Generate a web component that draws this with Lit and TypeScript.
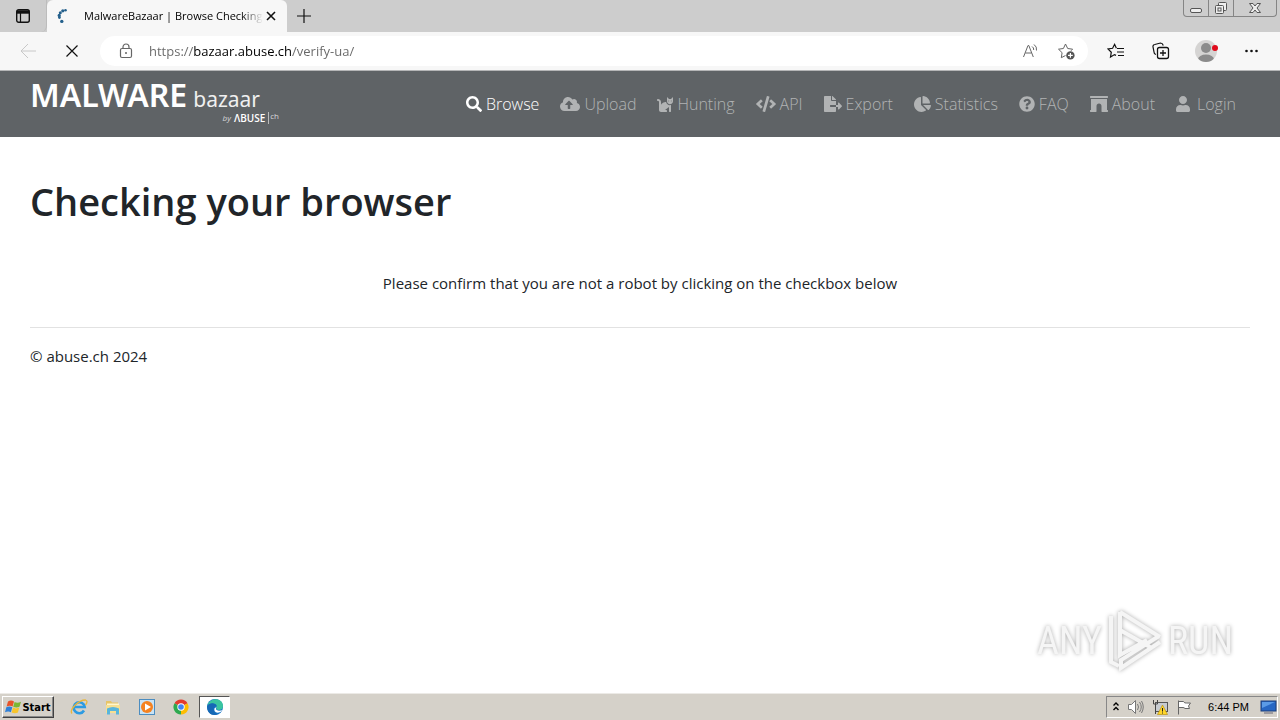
import { LitElement, html, css, svg } from "lit";
import { customElement } from "lit/decorators.js";
import { classMap } from "lit/directives/class-map.js";

const NAV = [
  { label: "Browse", w: 512, active: true, d: "M505 442.7L405.3 343c-4.5-4.5-10.6-7-17-7H372c27.6-35.3 44-79.7 44-128C416 93.1 322.9 0 208 0S0 93.1 0 208s93.1 208 208 208c48.3 0 92.7-16.4 128-44v16.3c0 6.4 2.5 12.5 7 17l99.7 99.7c9.4 9.4 24.6 9.4 33.9 0l28.3-28.3c9.4-9.4 9.4-24.6.1-34zM208 336c-70.7 0-128-57.2-128-128 0-70.7 57.2-128 128-128 70.7 0 128 57.2 128 128 0 70.7-57.2 128-128 128z" },
  { label: "Upload", w: 640, d: "M537.6 226.6c4.1-10.7 6.4-22.4 6.4-34.6 0-53-43-96-96-96-19.7 0-38.1 6-53.3 16.2C367 64.2 315.3 32 256 32c-88.4 0-160 71.6-160 160 0 2.7.1 5.4.2 8.1C40.2 219.8 0 273.2 0 336c0 79.5 64.5 144 144 144h368c70.7 0 128-57.3 128-128 0-61.9-44-113.6-102.4-125.4zM393.4 288H328v112c0 8.8-7.2 16-16 16h-48c-8.8 0-16-7.2-16-16V288h-65.4c-14.3 0-21.4-17.2-11.3-27.3l105.4-105.4c6.2-6.2 16.4-6.2 22.6 0l105.4 105.4c10.1 10.1 2.9 27.3-11.3 27.3z" },
  { label: "Hunting", w: 512, d: "M290.59 192c-20.18 0-106.82 1.98-162.59 85.95V192c0-52.94-43.06-96-96-96-17.67 0-32 14.33-32 32s14.33 32 32 32c17.64 0 32 14.36 32 32v256c0 35.3 28.7 64 64 64h176c8.84 0 16-7.16 16-16v-16c0-17.67-14.33-32-32-32h-32l128-96v144c0 8.84 7.16 16 16 16h32c8.84 0 16-7.16 16-16V289.86c-10.29 2.67-20.89 4.54-32 4.54-61.81 0-113.52-44.05-125.41-102.4zM448 96h-64l-64-64v134.4c0 53.02 42.98 96 96 96s96-42.98 96-96V32l-64 64zm-72 80c-8.84 0-16-7.16-16-16s7.16-16 16-16 16 7.16 16 16-7.16 16-16 16zm80 0c-8.84 0-16-7.16-16-16s7.16-16 16-16 16 7.16 16 16-7.16 16-16 16z" },
  { label: "API", w: 640, d: "M278.9 511.5l-61-17.7c-6.4-1.8-10-8.5-8.2-14.9L346.2 8.7c1.8-6.4 8.5-10 14.9-8.2l61 17.7c6.4 1.8 10 8.5 8.2 14.9L293.8 503.3c-1.9 6.4-8.5 10.1-14.9 8.2zm-114-112.2l43.5-46.4c4.6-4.9 4.3-12.7-.8-17.2L117 256l90.6-79.7c5.1-4.5 5.5-12.3.8-17.2l-43.5-46.4c-4.5-4.8-12.1-5.1-17-.5L3.8 247.2c-5.1 4.7-5.1 12.8 0 17.5l144.1 135.1c4.9 4.6 12.5 4.4 17-.5zm327.2.6l144.1-135.1c5.1-4.7 5.1-12.8 0-17.5L492.1 112.1c-4.8-4.5-12.4-4.3-17 .5L431.6 159c-4.6 4.9-4.3 12.7.8 17.2L523 256l-90.6 79.7c-5.1 4.5-5.5 12.3-.8 17.2l43.5 46.4c4.5 4.9 12.1 5.1 17 .6z" },
  { label: "Export", w: 576, d: "M384 121.9c0-6.3-2.5-12.4-7-16.9L279.1 7c-4.5-4.5-10.6-7-17-7H256v128h128zM571 308l-95.7-96.4c-10.1-10.1-27.4-3-27.4 11.3V288h-64v64h64v65.2c0 14.3 17.3 21.4 27.4 11.3L571 332c6.6-6.6 6.6-17.4 0-24zm-379 28v-32c0-8.8 7.2-16 16-16h176V160H248c-13.2 0-24-10.8-24-24V0H24C10.7 0 0 10.7 0 24v464c0 13.3 10.7 24 24 24h336c13.3 0 24-10.7 24-24V352H208c-8.8 0-16-7.2-16-16z" },
  { label: "Statistics", w: 544, d: "M527.79 288H290.5l158.03 158.03c6.04 6.04 15.98 6.53 22.19.68 38.7-36.46 65.32-85.61 73.13-140.86 1.34-9.46-6.51-17.85-16.06-17.85zm-15.83-64.8C503.72 103.74 408.26 8.28 288.8.04 279.68-.59 272 7.1 272 16.24V240h223.77c9.14 0 16.82-7.68 16.19-16.8zM224 288V50.71c0-9.55-8.39-17.4-17.84-16.06C86.99 51.49-4.1 155.6.14 280.37 4.5 408.51 114.83 513.59 243.03 511.98c50.4-.63 96.97-16.87 135.26-44.03 7.9-5.6 8.42-17.23 1.57-24.08L224 288z" },
  { label: "FAQ", w: 512, d: "M504 256c0 136.997-111.043 248-248 248S8 392.997 8 256C8 119.083 119.043 8 256 8s248 111.083 248 248zM262.655 90c-54.497 0-89.255 22.957-116.549 63.758-3.536 5.286-2.353 12.415 2.715 16.258l34.699 26.31c5.205 3.947 12.621 3.008 16.665-2.122 17.864-22.658 30.113-35.797 57.303-35.797 20.429 0 45.698 13.148 45.698 32.958 0 14.976-12.363 22.667-32.534 33.976C247.128 238.528 216 254.941 216 296v4c0 6.627 5.373 12 12 12h56c6.627 0 12-5.373 12-12v-1.333c0-28.462 83.186-29.647 83.186-106.667 0-58.002-60.165-102-116.531-102zM256 338c-25.365 0-46 20.635-46 46 0 25.364 20.635 46 46 46s46-20.636 46-46c0-25.365-20.635-46-46-46z" },
  { label: "About", w: 576, d: "M560 448h-16V96H32v352H16c-8.84 0-16 7.16-16 16v32c0 8.84 7.16 16 16 16h176c8.84 0 16-7.16 16-16V320c0-44.16 32-80 80-80s80 35.84 80 80v176c0 8.84 7.16 16 16 16h176c8.84 0 16-7.16 16-16v-32c0-8.84-7.16-16-16-16zm0-448H16C7.16 0 0 7.16 0 16v32c0 8.84 7.16 16 16 16h544c8.84 0 16-7.16 16-16V16c0-8.84-7.16-16-16-16z" },
  { label: "Login", w: 448, wide: true, d: "M224 256c70.7 0 128-57.3 128-128S294.7 0 224 0 96 57.3 96 128s57.3 128 128 128zm89.6 32h-16.7c-22.2 10.2-46.9 16-72.9 16s-50.6-5.8-72.9-16h-16.7C60.2 288 0 348.2 0 422.4V464c0 26.5 21.5 48 48 48h352c26.5 0 48-21.5 48-48v-41.6c0-74.2-60.2-134.4-134.4-134.4z" },
];

const line = (body: unknown, size = 16) => html`
  <svg class="line" width=${size} height=${size} viewBox="0 0 ${size} ${size}" aria-hidden="true">${body}</svg>`;

@customElement("browser-chrome")
class BrowserChrome extends LitElement {
  static styles = css`
    :host { display: block; font-family: "Open Sans", "Noto Sans", sans-serif; color: #111; }
    button { border: 0; padding: 0; margin: 0; background: none; color: inherit; font: inherit; display: grid; place-items: center; }
    svg { display: block; }
    .line { fill: none; stroke: currentColor; stroke-width: 1; }
    .strip { display: flex; height: 32px; background: #cdcdcd; }
    .menu { width: 47px; height: 32px; border-right: 1px solid #bcbcbc; box-sizing: border-box; border-radius: 0 0 6px 0; }
    .tab { display: flex; align-items: center; width: 240px; box-sizing: border-box; padding: 0 8px; background: #f7f7f7; border-radius: 6px 6px 0 0; }
    .spin { margin-right: 12px; }
    .title { flex: 1; overflow: hidden; white-space: nowrap; font-size: 11px; line-height: 16px; color: #000;
      -webkit-mask-image: linear-gradient(to right, #000 88%, transparent); mask-image: linear-gradient(to right, #000 88%, transparent); }
    .close { width: 16px; height: 16px; }
    .add { width: 34px; }
    .controls { margin-left: auto; margin-right: 3px; height: 17px; display: flex; border: 1px solid #858585; border-top: 0; border-radius: 0 0 4px 4px; box-sizing: border-box; color: #555; }
    .controls button { width: 25px; border-right: 1px solid #858585; }
    .controls button:last-child { width: 42px; border-right: 0; }
    .bar { display: flex; align-items: center; height: 38px; background: #f7f7f7; border-bottom: 1px solid #b5b6b7; }
    .stop { width: 32px; height: 32px; margin-right: 12px; }
    .back { width: 56px; height: 32px; color: #c8c8c8; }
    .address { flex: 1; display: flex; align-items: center; height: 30px; padding: 0 4px 0 18px; box-sizing: border-box; background: #fff; border-radius: 15px; color: #666; }
    .url { flex: 1; min-width: 0; margin: 0 8px 0 15px; padding: 0; border: 0; outline: 0; font: inherit; font-size: 13px; line-height: 20px; height: 20px; color: transparent;
      background: linear-gradient(to right, #666 45px, #000 45px, #000 143px, #666 143px); -webkit-background-clip: text; background-clip: text; }
    .small { width: 36px; height: 28px; }
    .tools { display: flex; padding: 0 6px; }
    .tools button { width: 44px; height: 32px; margin-right: 1px; }
  `;
  render() {
    return html`
      <div class="strip">
        <button class="menu" aria-label="Tab actions">
          ${line(svg`<rect x="1.7" y="1.7" width="12.6" height="12.6" rx="2" stroke-width="1.4"/><path d="M2 4h12" stroke-width="3.4"/><path d="M5.5 5v9" stroke-width="1.2"/>`)}
        </button>
        <div class="tab">
          <svg class="spin" width="17" height="16" viewBox="0 0 17 16" fill="#24608c" aria-hidden="true"><circle cx="10.500" cy="2.200" r="1.300"/><circle cx="7.800" cy="2.800" r="1.600"/><circle cx="5.300" cy="4.800" r="1.500"/><circle cx="4.200" cy="7.400" r="1.600"/><circle cx="4.400" cy="9.500" r="1.400"/><circle cx="6.800" cy="13.400" r="1.700"/></svg>
          <span class="title">MalwareBazaar | Browse Checking</span>
          <button class="close" aria-label="Close tab">${line(svg`<path d="M4 4l8 8M12 4l-8 8" stroke-width="1.6"/>`)}</button>
        </div>
        <button class="add" aria-label="New tab">${line(svg`<path d="M8 1v14M1 8h14" stroke-width="1.2"/>`)}</button>
        <div class="controls">
          <button aria-label="Minimize">${line(svg`<rect x="2.5" y="8.5" width="11" height="4" rx="1.5" fill="#eee"/>`)}</button>
          <button aria-label="Restore">${line(svg`<rect x="5.5" y="2.5" width="8" height="8" rx="1" fill="#eee"/><rect x="2.5" y="5.5" width="8" height="8" rx="1" fill="#eee"/><rect x="5" y="8" width="3" height="3"/>`)}</button>
          <button aria-label="Close">${line(svg`<path d="M2.5 3.5h3.500L8 6l2-2.500h3.500L10 8l3.500 4.500H10L8 10l-2 2.500H2.500L6 8z" fill="#eee"/>`)}</button>
        </div>
      </div>
      <div class="bar">
        <button class="back" aria-label="Back">${line(svg`<path d="M16 8H1M8 1L1 8l7 7" />`)}</button>
        <button class="stop" aria-label="Stop">${line(svg`<path d="M2.500 2.500l11 11M13.500 2.500l-11 11" stroke-width="1.2"/>`)}</button>
        <form class="address">
          ${line(svg`<rect x="2.500" y="5.500" width="11" height="9" rx="1.500" stroke-width="1.200"/><path d="M5 5.500V4a3 3 0 0 1 6 0v1.500" stroke-width="1.200"/><circle cx="8" cy="10" r=".6" fill="currentColor"/>`)}
          <input class="url" aria-label="Address" value="https://bazaar.abuse.ch/verify-ua/" spellcheck="false" />
          <button type="button" class="small" aria-label="Read aloud">
            ${line(svg`<path d="M1.500 14L6 2.500h.8L11.300 14M3.300 10h6.200M10 3.500a3.500 3.500 0 0 1 1.700 3.500M12 1.500a6 6 0 0 1 2.500 6"/>`)}
          </button>
          <button type="button" class="small" aria-label="Add to favorites">
            ${line(svg`<path d="M8.500 13.500L4.300 15.700l.8-5L1.500 7.200l4.900-.7L8.500 2l2.200 4.500 4.900.7-1.600 1.600"/><circle cx="13.400" cy="13.400" r="4.200" fill="#555" stroke="none"/><path d="M13.400 11v4.800M11 13.400h4.800" stroke="#fff" stroke-width="1.200"/>`, 18)}
          </button>
        </form>
        <div class="tools">
          <button aria-label="Favorites">${line(svg`<path d="M9 13.400L7.500 12.600 3.500 15l.8-4.800L1 7l4.600-.7 2-4 1.800 4M10 6.500h7M10 10h7M11 13.500h6" stroke-width="1.200"/>`, 18)}</button>
          <button aria-label="Collections">${line(svg`<path d="M4 12.500a2.500 2.500 0 0 1-2-2.500L1 5a2 2 0 0 1 1.800-2.500L8.500 1q2 0 2.800 2.500" stroke-width="1.200"/><rect x="5.500" y="5.500" width="11" height="11" rx="2" stroke-width="1.300"/><path d="M11 8v6M8 11h6" stroke-width="1.300"/>`, 18)}</button>
          <button aria-label="Profile">
            <svg width="24" height="24" viewBox="0 0 24 24"><clipPath id="c"><circle cx="12" cy="12" r="11"/></clipPath><circle cx="12" cy="12" r="11" fill="#d5d4d3"/><g clip-path="url(#c)" fill="#8b8b8b"><circle cx="12" cy="9" r="5"/><ellipse cx="12" cy="20.500" rx="8" ry="5"/></g><circle cx="21" cy="9" r="3" fill="#e00b1c"/></svg>
          </button>
          <button aria-label="Settings and more">${line(svg`<g fill="currentColor" stroke="none"><circle cx="3.500" cy="8" r="1.300"/><circle cx="8.500" cy="8" r="1.300"/><circle cx="13.500" cy="8" r="1.300"/></g>`)}</button>
        </div>
      </div>`;
  }
}

@customElement("bazaar-page")
class BazaarPage extends LitElement {
  static styles = css`
    :host { display: block; position: relative; overflow: hidden; background: #fff; color: #212529; font-family: "Open Sans", "Noto Sans", sans-serif; }
    .header { display: flex; justify-content: space-between; height: 66px; background: #5f6366; padding: 0 44px 0 30px; }
    .brand { display: grid; align-content: start; justify-items: end; width: 249px; padding-top: 8px; color: #fff; text-decoration: none; }
    .name { justify-self: start; display: flex; align-items: baseline; gap: 6px; height: 33px; font-family: "Noto Sans", sans-serif; white-space: nowrap; }
    .big { font-size: 32px; line-height: 32px; font-weight: 600; }
    .rest { font-size: 21px; line-height: 32px; font-weight: 400; color: #f0f0f0; }
    .by { display: flex; align-items: center; gap: 3px; font-size: 8px; line-height: 12px; height: 12px; color: #d8d9da; }
    .abuse { font-size: 10px; font-weight: 600; color: #fff; }
    .ch { border-left: 1px solid #bbb; padding-left: 1px; height: 12px; line-height: 8px; }
    .nav { display: flex; align-items: center; gap: 21px; }
    .item { display: flex; align-items: center; gap: 4px; color: #b1b3b4; text-decoration: none; font-size: 16px; line-height: 24px; font-weight: 300; }
    .wide { gap: 7px; }
    .active { color: #fff; }
    .icon { display: block; height: 16px; width: auto; fill: currentColor; }
    .main { padding: 40px 30px 0; }
    .heading { margin: 0; font-size: 38px; line-height: 48px; font-weight: 600; }
    .note { margin: 46px 0 0; text-align: center; font-size: 15px; line-height: 24px; }
    .rule { margin: 32px 0 16px; border: 0; border-top: 1px solid #e2e2e2; }
    .foot { font-size: 15px; line-height: 24px; }
    .mark { position: absolute; right: 47px; bottom: 20px; display: flex; align-items: center; gap: 5px; color: #f5f5f5;
      font-family: "Liberation Sans Narrow", "Roboto Condensed", "Liberation Sans", sans-serif; font-size: 38px; line-height: 64px; filter: drop-shadow(0 0 2px #aaa); }
  `;
  render() {
    return html`
      <header class="header">
        <a class="brand" href="#">
          <span class="name"><span class="big">MALWARE</span><span class="rest">bazaar</span></span>
          <span class="by"><i>by</i><span class="abuse">ΛBUSE</span><span class="ch">ch</span></span>
        </a>
        <nav class="nav">
          ${NAV.map((n) => html`<a href="#" class=${classMap({ item: true, active: !!n.active, wide: !!n.wide })}>
            <svg class="icon" viewBox="0 0 ${n.w} 512" aria-hidden="true"><path d=${n.d}></path></svg><span>${n.label}</span></a>`)}
        </nav>
      </header>
      <main class="main">
        <h1 class="heading">Checking your browser</h1>
        <p class="note">Please confirm that you are not a robot by clicking on the checkbox below</p>
        <hr class="rule" />
        <footer class="foot">© abuse.ch 2024</footer>
      </main>
      <div class="mark">
        <span>ANY</span>
        <svg width="56" height="64" viewBox="0 0 56 64" fill="none" stroke="currentColor" stroke-width="4"><path d="M4 7v46l8 4M13 3v43l27-15M13 3l40 25M13 3v18l30 17M53 33L14 59v-8l38-24"/></svg>
        <span>RUN</span>
      </div>`;
  }
}

@customElement("task-bar")
class TaskBar extends LitElement {
  static styles = css`
    :host { display: flex; align-items: center; height: 27px; box-sizing: border-box; padding: 0 2px; background: #d5d1c9; border-top: 1px solid #eceae6; box-shadow: 0 -1px #d5d1c9; font-family: "DejaVu Sans Condensed", "DejaVu Sans", sans-serif; color: #000; }
    svg { display: block; }
    button { padding: 0; border: 0; background: none; color: inherit; font: inherit; display: grid; place-items: center; }
    .start { display: flex; align-items: center; justify-content: center; width: 52px; height: 22px; border: 1px solid; border-color: #fff #404040 #404040 #fff; box-shadow: inset -1px -1px #888; font-size: 11px; font-weight: 700; font-family: "DejaVu Sans Condensed", "Liberation Sans", sans-serif; }
    .apps { display: flex; flex: 1; margin-left: 8px; }
    .app { width: 34px; height: 22px; }
    .current { width: 31px; margin-left: 1px; background: #fff; border: 1px solid; border-color: #555 #fff #fff #555; }
    .tray { display: flex; align-items: center; gap: 8px; height: 22px; box-sizing: border-box; border: 1px solid; border-color: #888 #fff #fff #888; padding: 0 0 0 5px; }
    .time { font-size: 11px; line-height: 16px; font-family: "Liberation Sans", sans-serif; margin: 0 3px 0 8px; }
  `;
  render() {
    return html`
      <button class="start">
        <svg width="17" height="16" viewBox="0 0 17 16"><path d="M3 2.500q3-2 6 0L7.600 7.500q-2.600-1.600-6 0z" fill="#e8542a"/><path d="M9.600 3q2.700 1.500 6.400-.2l-1.500 5q-3 1.500-6.300 0z" fill="#7cb733"/><path d="M1.300 8.300q3-1.800 6 0L5.900 13.200q-2.600-1.600-5.900 0z" fill="#2f80d8"/><path d="M8 8.600q2.700 1.600 6.300 0l-1.400 5q-3 1.500-6.300 0z" fill="#f8c52c"/></svg>
        Start
      </button>
      <div class="apps">
        <button class="app" aria-label="Internet Explorer"><svg width="18" height="18" viewBox="0 0 18 18" fill="none"><path d="M14 12.500a5.500 5.500 0 1 1 .7-3.500H4" stroke="#2c9be2" stroke-width="2.600"/><path d="M2 15.500C-1 12 8 2 15.500 2q3 1 0 5" stroke="#e9b63a" stroke-width="1.300"/></svg></button>
        <button class="app" aria-label="Explorer"><svg width="18" height="18" viewBox="0 0 18 18"><path d="M2 3h5l1 1.500h6V14H2z" fill="#e7c467"/><path d="M3 5.500h12V9H3z" fill="#fff6cf"/><path d="M2 7h14v8H2z" fill="#f6df92"/><path d="M3 16.500v-6q6-3 12 0v6h-3v-3.500H6v3.500z" fill="#58b5dc"/></svg></button>
        <button class="app" aria-label="Media Player"><svg width="18" height="18" viewBox="0 0 18 18"><rect x="1.500" y="1.500" width="15" height="15" fill="#c9e3f5" stroke="#4c8dc0"/><circle cx="9" cy="9" r="6" fill="#f58220"/><path d="M7 5.500v7l6-3.500z" fill="#fff"/></svg></button>
        <button class="app" aria-label="Chrome"><svg width="16" height="16" viewBox="0 0 16 16"><path d="M8 8L1.500 4.200A7.500 7.500 0 0 1 14.500 4.200z" fill="#e33b2e"/><path d="M8 8L1.500 4.200A7.500 7.500 0 0 0 8 15.500z" fill="#2da94f"/><path d="M8 8l6.500-3.800A7.500 7.500 0 0 1 8 15.500z" fill="#fdbd00"/><circle cx="8" cy="8" r="3.700" fill="#fff"/><circle cx="8" cy="8" r="2.800" fill="#4285f4"/></svg></button>
        <button class="app current" aria-label="Edge"><svg width="18" height="18" viewBox="0 0 18 18"><circle cx="9" cy="9" r="8" fill="#1573c5"/><path d="M1.200 8C3-1 17-1 17 8q0 4-4.500 4-3-.5-2-2.500C11.500 5 4 4 1.200 8z" fill="#3ac5a0"/><path d="M1.200 8c2-4 9-3.500 9.500 0Q7 8 7.500 12q1 3.500 4 4.500C5 18.500.5 14 1.200 8z" fill="#1668b5"/><path d="M10.500 9q-2 3 2.500 3.800 2 0 3.500-.8-2 3-5 2.800-4-.8-3-4.500z" fill="#fff"/></svg></button>
      </div>
      <div class="tray">
        <svg width="8" height="14" viewBox="0 0 8 14" fill="none" stroke="#000" stroke-width="1.400"><path d="M1.500 5.500L4 3l2.500 2.500M1.500 10L4 7.500 6.500 10"/></svg>
        <svg width="16" height="16" viewBox="0 0 16 16" fill="none" stroke="#777"><path d="M.5 5.500h3l4-4v13l-4-4h-3z" fill="#fff"/><path d="M9.500 5q2 3 0 6M11.500 3q3.500 5 0 10M13.500 2q3.500 6 0 12"/></svg>
        <svg width="16" height="16" viewBox="0 0 16 16"><rect x="3.500" y="3.500" width="12" height="9" fill="#c7cbd0" stroke="#555"/><path d="M1.500 1v4h4V1M3.500 5v10" fill="none" stroke="#444"/><path d="M10.500 6l5 9.500h-10z" fill="#ffd629" stroke="#b48a00" stroke-width=".6"/><path d="M10.500 9v3.500M10.500 13.500v1" stroke="#222"/></svg>
        <svg width="16" height="16" viewBox="0 0 16 16" fill="#fff" stroke="#666"><path d="M2.500 15.500V1.500M2.500 2.500h5q1 2 3 1.500h4l-2 3 1 2.500H9q-1-1-2-1H2.500z"/></svg>
        <span class="time">6:44 PM</span>
        <svg width="17" height="16" viewBox="0 0 17 16"><rect x="1" y="2" width="15" height="10" fill="#2767c3" stroke="#1c3f7a"/><path d="M2 3h13L2 9z" fill="#5b9be6"/><path d="M4 14h9" stroke="#667"/></svg>
      </div>`;
  }
}

@customElement("app-root")
class AppRoot extends LitElement {
  static styles = css`
    :host { display: flex; flex-direction: column; min-height: 100vh; background: #fff; }
    .page { flex: 1; }
  `;
  render() {
    return html`<browser-chrome></browser-chrome><bazaar-page class="page"></bazaar-page><task-bar></task-bar>`;
  }
}
